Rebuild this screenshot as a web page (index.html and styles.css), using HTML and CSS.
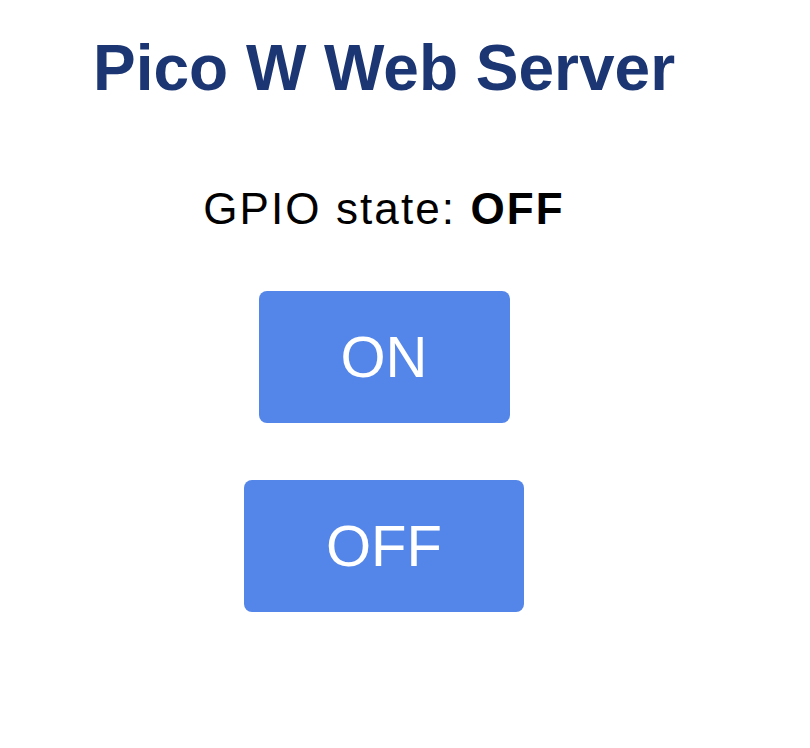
FILE: index.html
```html
<!DOCTYPE html>
<html>
<head>
<meta charset="utf-8">
<title>Pico W Web Server</title>
<link rel="stylesheet" href="styles.css">
</head>
<body>
<main class="page">
  <h1 class="title">Pico W Web Server</h1>
  <p class="state">GPIO state: <strong>OFF</strong></p>
  <a class="button button-on" href="#">ON</a>
  <a class="button button-off" href="#">OFF</a>
</main>
</body>
</html>
```
FILE: styles.css
```css
html, body {
  margin: 0;
  padding: 0;
  background: #ffffff;
}
.page {
  width: 768px;
  display: flex;
  flex-direction: column;
  align-items: center;
  font-family: "Liberation Sans", Arial, Helvetica, sans-serif;
  text-align: center;
}
.title {
  margin: 36px 0 0;
  font-size: 64px;
  line-height: 64px;
  font-weight: bold;
  color: #1b3673;
}
.state {
  margin: 88px 0 0;
  font-size: 44px;
  line-height: 42px;
  letter-spacing: 2.1px;
  color: #000000;
}
.state strong {
  font-weight: bold;
}
.button {
  display: block;
  box-sizing: border-box;
  height: 132px;
  line-height: 132px;
  padding: 0 82px;
  background-color: #5486ea;
  color: #ffffff;
  border-radius: 8px;
  text-decoration: none;
  font-size: 58px;
}
.button-on {
  margin-top: 61px;
}
.button-off {
  margin-top: 57px;
}
```
